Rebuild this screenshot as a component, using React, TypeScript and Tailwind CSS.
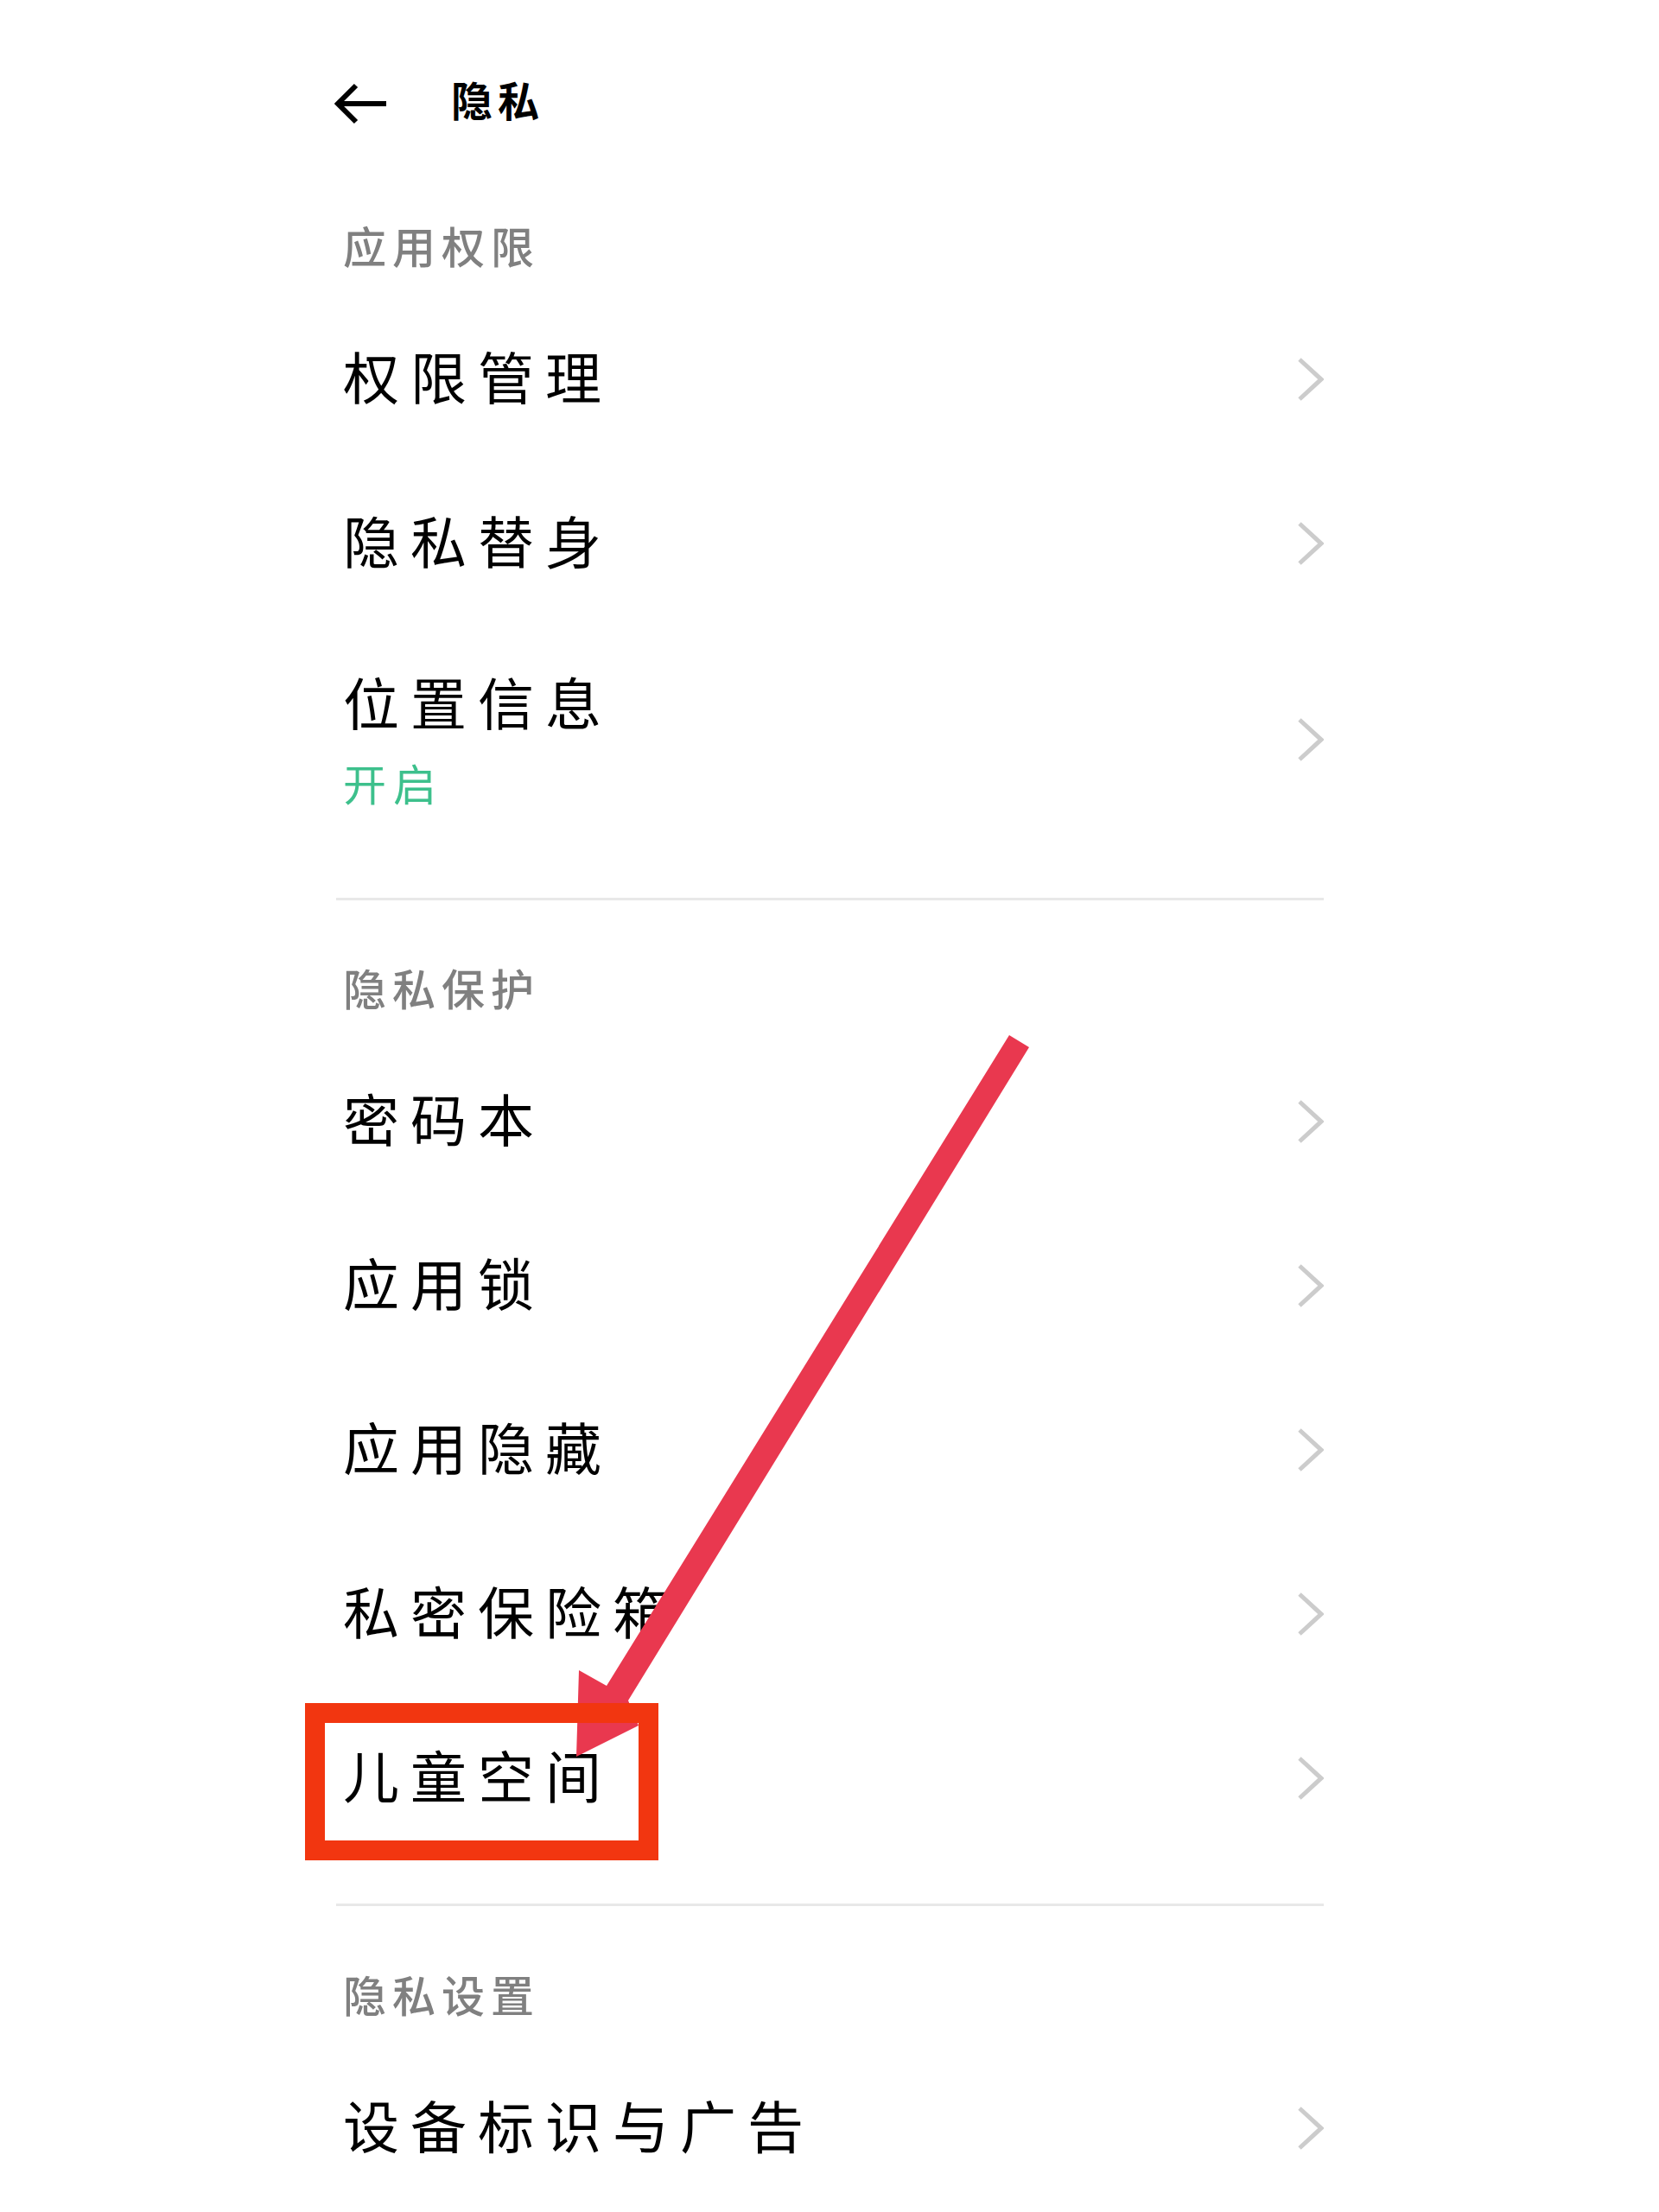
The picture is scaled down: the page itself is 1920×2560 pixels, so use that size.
import React from 'react';

function Chevron() {
    return (
        <svg viewBox="0 0 30 50" className="w-[30px] h-[50px] shrink-0" fill="none" stroke="#cccccc" strokeWidth="5">
            <path d="M2 2 L27 25 L2 48" />
        </svg>
    );
}

function Row({ label }: { label: string }) {
    return (
        <div className="h-[190px] flex items-center justify-between pl-[8px]">
            <span className="-mt-[10px] text-[65px] leading-none tracking-[13px] text-black">{label}</span>
            <Chevron />
        </div>
    );
}

function SectionLabel({ label }: { label: string }) {
    return (
        <div className="h-[114px] pb-[8px] flex items-center pl-[8px] text-[50px] leading-none tracking-[7px] font-medium text-[#808080]">
            {label}
        </div>
    );
}

export default function App() {
    return (
        <div className="relative w-[1920px] h-[2560px] bg-white overflow-hidden font-['Noto_Sans_CJK_SC','Noto_Sans_CJK_JP',sans-serif]">
            <div className="ml-[389px] w-[1143px] flex flex-col">
                <header className="h-[230px] pt-[10px] flex items-center">
                    <svg viewBox="0 0 60 48" className="w-[60px] h-[48px] -ml-[2px]" fill="none" stroke="#000000" strokeWidth="6">
                        <path d="M60 24 L4 24" />
                        <path d="M25 3 L4 24 L25 45" />
                    </svg>
                    <h1 className="ml-[75px] -mt-[13px] text-[48px] leading-none tracking-[6px] font-bold text-black">隐私</h1>
                </header>

                <SectionLabel label="应用权限" />
                <Row label="权限管理" />
                <Row label="隐私替身" />
                <div className="h-[264px] flex items-center justify-between pl-[8px]">
                    <div className="-mt-[3px] flex flex-col">
                        <span className="text-[65px] leading-none tracking-[13px] text-black">位置信息</span>
                        <span className="mt-[36px] text-[50px] leading-none tracking-[8px] text-[#3dc08c]">开启</span>
                    </div>
                    <Chevron />
                </div>
                <div className="mt-[51px] h-[3px] bg-[#e8e8e8]" />

                <div className="mt-[47px]">
                    <SectionLabel label="隐私保护" />
                </div>
                <Row label="密码本" />
                <Row label="应用锁" />
                <Row label="应用隐藏" />
                <Row label="私密保险箱" />
                <Row label="儿童空间" />
                <div className="mt-[50px] h-[3px] bg-[#e8e8e8]" />

                <div className="mt-[48px]">
                    <SectionLabel label="隐私设置" />
                </div>
                <Row label="设备标识与广告" />
            </div>

            {/* annotation arrow + highlight box */}
            <svg viewBox="0 0 1920 2560" className="absolute inset-0 w-[1920px] h-[2560px] pointer-events-none">
                <polygon points="1168,1198 1191,1212 727,1968 739,1997 667,2033 670,1933 702,1951" fill="#e9384f" />
            </svg>
            <div className="absolute left-[353px] top-[1971px] w-[409px] h-[182px] border-[23px] border-[#f23610]" />
        </div>
    );
}
